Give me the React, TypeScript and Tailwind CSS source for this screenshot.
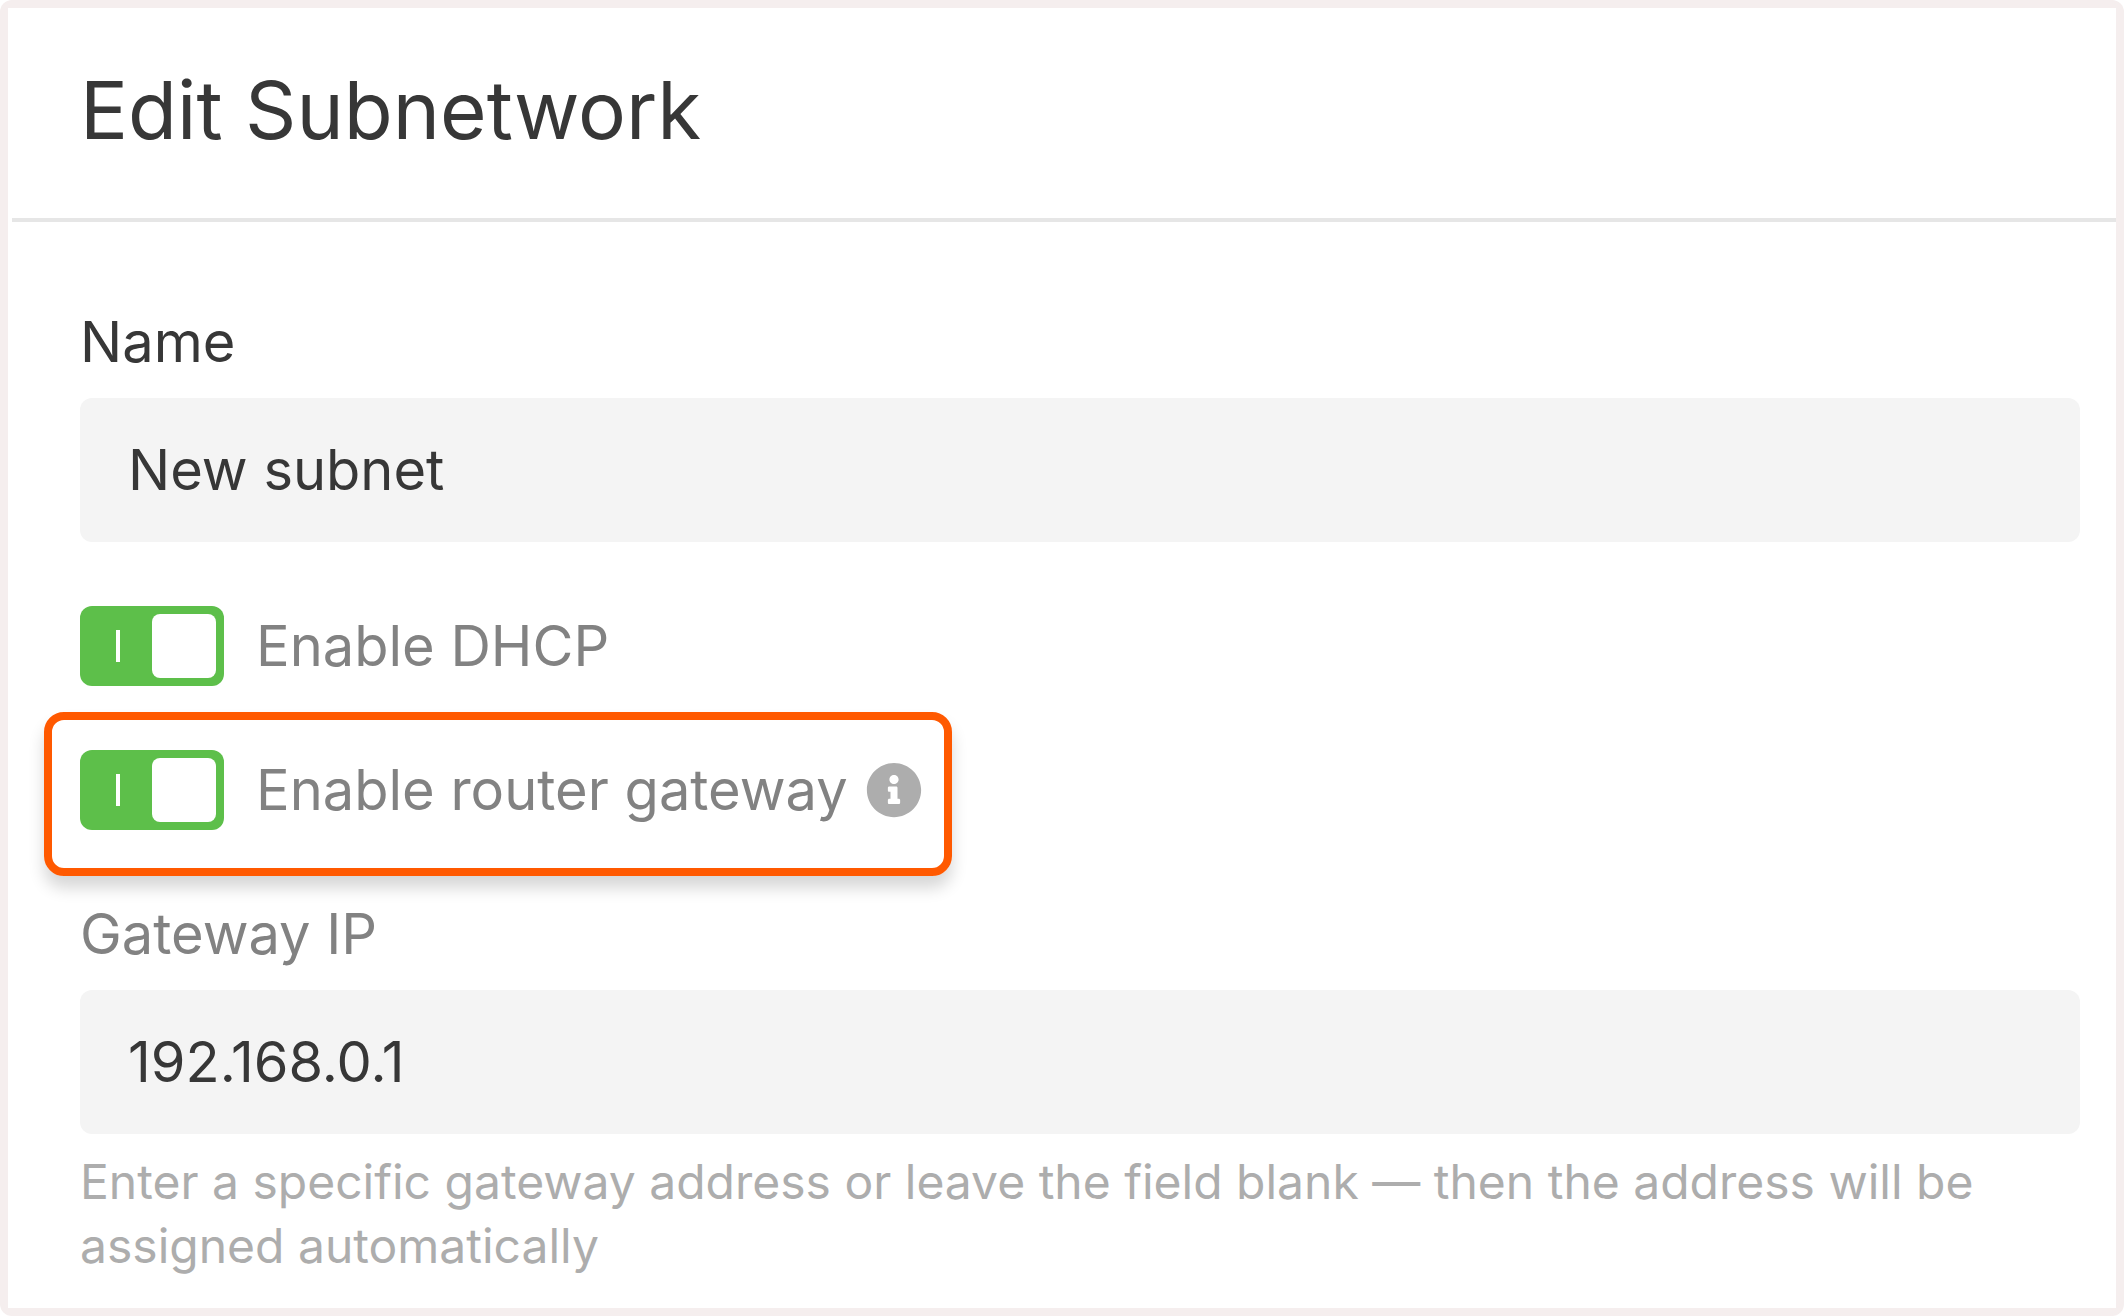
import { useState } from "react";
import { FaInfoCircle } from "react-icons/fa";

function Toggle({ id, label }: { id: string; label: string }) {
  const [on, setOn] = useState(true);
  return (
    <label htmlFor={id} className="flex cursor-pointer items-center gap-8">
      <span className={on ? "relative flex h-20 w-36 shrink-0 items-center rounded-xl bg-[#5dbf4a] p-2" : "relative flex h-20 w-36 shrink-0 flex-row-reverse items-center rounded-xl bg-[#adadad] p-2"}>
        <input
          id={id}
          type="checkbox"
          role="switch"
          checked={on}
          onChange={(e) => setOn(e.target.checked)}
          className="absolute inset-0 cursor-pointer appearance-none rounded-xl"
        />
        <span className="flex flex-1 justify-center pr-1">
          <span className="h-8 w-1 bg-white" />
        </span>
        <span className="size-16 rounded-lg bg-white" />
      </span>
      <span className="text-[56px] leading-20 text-[#828282]">{label}</span>
    </label>
  );
}

export default function App() {
  return (
    <main className="min-h-screen rounded-xl bg-[#f5eeee] p-2 font-['Inter',sans-serif] text-[#373737]">
      <div className="min-h-[calc(100vh-16px)] bg-white">
        <header className="ml-1 border-b-4 border-[#e6e6e6] pt-[54px] pr-9 pb-[60px] pl-17">
          <h1 className="text-[80px] leading-[96px]">Edit Subnetwork</h1>
        </header>
        <form className="pt-20 pr-9 pl-18" onSubmit={(e) => e.preventDefault()}>
          <label htmlFor="name" className="block text-[56px] leading-20">Name</label>
          <input id="name" type="text" defaultValue="New subnet" className="mt-4 block h-36 w-full rounded-xl bg-[#f4f4f4] px-12 text-[56px] outline-none" />
          <div className="mt-16">
            <Toggle id="dhcp" label="Enable DHCP" />
          </div>
          <div className="mt-[26px] -ml-9 flex w-fit items-start gap-[18px] rounded-[20px] border-8 border-[#ff5900] pt-[30px] pr-[22px] pb-[38px] pl-7 shadow-[0_12px_16px_rgba(0,0,0,0.16)]">
            <Toggle id="router" label="Enable router gateway" />
            <button type="button" aria-label="About the router gateway" className="flex h-20 items-center text-[#adadad]">
              <FaInfoCircle className="size-14" />
            </button>
          </div>
          <label htmlFor="ip" className="mt-[18px] block text-[56px] leading-20 text-[#828282]">Gateway IP</label>
          <input id="ip" type="text" defaultValue="192.168.0.1" aria-describedby="ip-hint" className="mt-4 block h-36 w-full rounded-xl bg-[#f4f4f4] px-12 text-[56px] outline-none" />
          <p id="ip-hint" className="mt-4 text-[48px] leading-16 text-[#adadad]">
            Enter a specific gateway address or leave the field blank — then the address will be assigned automatically
          </p>
        </form>
      </div>
    </main>
  );
}
